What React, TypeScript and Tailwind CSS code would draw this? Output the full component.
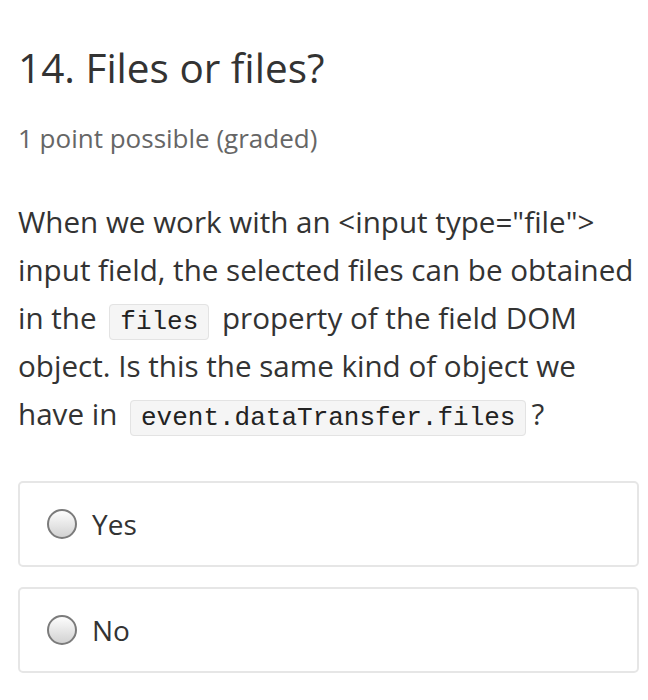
import React from "react";

function Code({ children }: { children: React.ReactNode }) {
  return (
    <code className="mx-[5px] rounded-[4px] border border-[#e3e3e3] bg-[#f5f5f5] px-[10px] py-[2px] font-['Liberation_Mono',monospace] text-[26px] leading-[26px] text-[#222]">
      {children}
    </code>
  );
}

function Option({ label }: { label: string }) {
  return (
    <label className="flex h-[86px] items-center rounded-[5px] border-2 border-[#e6e6e6] bg-white pl-[27px]">
      <span className="h-[30px] w-[30px] shrink-0 rounded-full border-2 border-[#7b7b7b] bg-linear-to-b from-[#fdfdfd] to-[#d2d2d2]" />
      <span className="ml-[15px] text-[28px] leading-[34px] text-[#333]">{label}</span>
    </label>
  );
}

export default function App() {
  return (
    <div className="min-h-[700px] bg-white pl-[18px] pr-[9px] pt-[44px] font-['Open_Sans',sans-serif]">
      <h1 className="text-[40.5px] leading-[48px] text-[#333]">14. Files or files?</h1>
      <div className="mt-[30px] text-[26px] leading-[32px] text-[#666]">1 point possible (graded)</div>
      <p className="mt-[44px] text-[29.6px] leading-[48px] text-[#333]">
        When we work with an &lt;input type="file"&gt; input field, the selected files can be obtained in the{" "}
        <Code>files</Code> property of the field DOM object. Is this the same kind of object we have in{" "}
        <Code>event.dataTransfer.files</Code>?
      </p>
      <div className="mt-[43px] flex flex-col gap-[20px]">
        <Option label="Yes" />
        <Option label="No" />
      </div>
    </div>
  );
}
